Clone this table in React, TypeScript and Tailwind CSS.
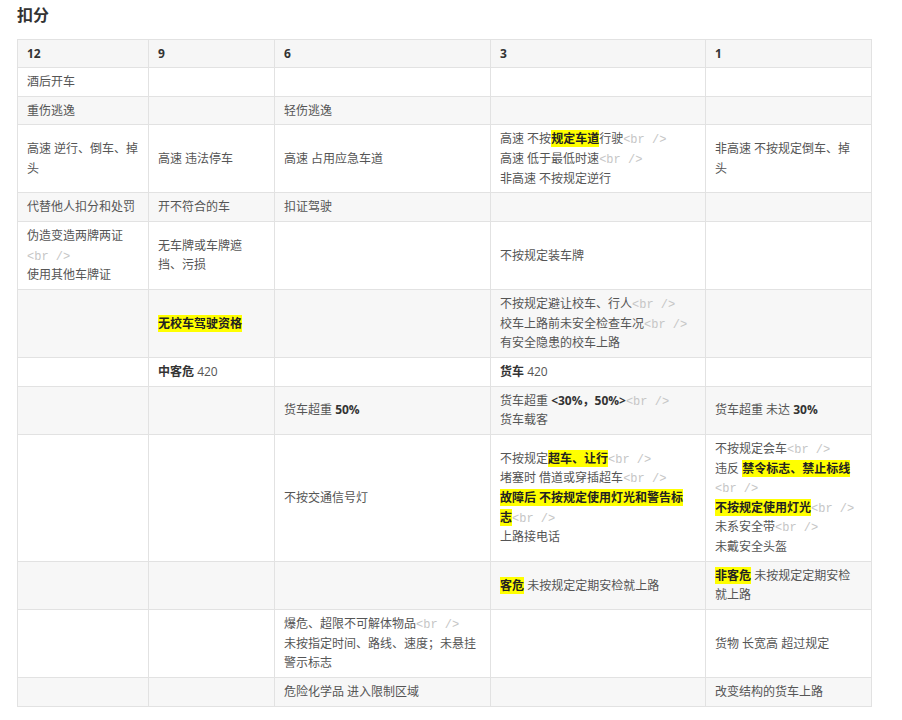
import React from 'react';

const Br: React.FC = () => (
  <span className="font-['Liberation_Mono',monospace] leading-none text-[#c6c6c6]">&lt;br /&gt;</span>
);

const Hl: React.FC<{ children: React.ReactNode }> = ({ children }) => (
  <b className="bg-[#ffff00] font-bold text-[#222]">{children}</b>
);

const B: React.FC<{ children: React.ReactNode }> = ({ children }) => (
  <b className="font-bold text-[#333]">{children}</b>
);

type Row = React.ReactNode[];

const rows: Row[] = [
  ['酒后开车', '', '', '', ''],
  ['重伤逃逸', '', '轻伤逃逸', '', ''],
  [
    <>高速 逆行、倒车、掉<br />头</>,
    '高速 违法停车',
    '高速 占用应急车道',
    <>高速 不按<Hl>规定车道</Hl>行驶<Br /><br />高速 低于最低时速<Br /><br />非高速 不按规定逆行</>,
    <>非高速 不按规定倒车、掉<br />头</>,
  ],
  ['代替他人扣分和处罚', '开不符合的车', '扣证驾驶', '', ''],
  [
    <>伪造变造两牌两证<br /><Br /><br />使用其他车牌证</>,
    <>无车牌或车牌遮<br />挡、污损</>,
    '',
    '不按规定装车牌',
    '',
  ],
  [
    '',
    <Hl>无校车驾驶资格</Hl>,
    '',
    <>不按规定避让校车、行人<Br /><br />校车上路前未安全检查车况<Br /><br />有安全隐患的校车上路</>,
    '',
  ],
  ['', <><B>中客危</B> 420</>, '', <><B>货车</B> 420</>, ''],
  [
    '',
    '',
    <>货车超重 <B>50%</B></>,
    <>货车超重 <B>&lt;30%，50%&gt;</B><Br /><br />货车载客</>,
    <>货车超重 未达 <B>30%</B></>,
  ],
  [
    '',
    '',
    '不按交通信号灯',
    <>
      不按规定<Hl>超车、让行</Hl><Br /><br />
      堵塞时 借道或穿插超车<Br /><br />
      <Hl>故障后 不按规定使用灯光和警告标<br />志</Hl><Br /><br />
      上路接电话
    </>,
    <>
      不按规定会车<Br /><br />
      违反 <Hl>禁令标志、禁止标线</Hl><br /><Br /><br />
      <Hl>不按规定使用灯光</Hl><Br /><br />
      未系安全带<Br /><br />
      未戴安全头盔
    </>,
  ],
  [
    '',
    '',
    '',
    <><Hl>客危</Hl> 未按规定定期安检就上路</>,
    <><Hl>非客危</Hl> 未按规定定期安检<br />就上路</>,
  ],
  [
    '',
    '',
    <>爆危、超限不可解体物品<Br /><br />未按指定时间、路线、速度；未悬挂<br />警示标志</>,
    '',
    '货物 长宽高 超过规定',
  ],
  ['', '', '危险化学品 进入限制区域', '', '改变结构的货车上路'],
];

const widths = ['w-[131px]', 'w-[126px]', 'w-[216px]', 'w-[215px]', 'w-[166px]'];

export default function App() {
  return (
    <div className="min-h-[720px] bg-white pl-[17px] pt-[3px] font-['Open_Sans','Noto_Sans_CJK_SC',sans-serif] text-[#555]">
      <h2 className="text-[16px] font-bold leading-6 text-[#333]">扣分</h2>
      <table className="mt-[12px] table-fixed border-collapse text-[12px] leading-[19.65px]">
        <colgroup>
          {widths.map((w, i) => (
            <col key={i} className={w} />
          ))}
        </colgroup>
        <thead>
          <tr className="bg-[#f6f6f6]">
            {['12', '9', '6', '3', '1'].map((h) => (
              <th
                key={h}
                className="border border-[#e2e2e2] px-[9px] py-[4px] text-left font-bold leading-[19px] text-[#333]"
              >
                {h}
              </th>
            ))}
          </tr>
        </thead>
        <tbody>
          {rows.map((row, i) => (
            <tr key={i} className={i % 2 === 1 ? 'bg-[#f7f7f7]' : 'bg-white'}>
              {row.map((cell, j) => (
                <td
                  key={j}
                  className="border border-[#e2e2e2] px-[9px] py-[4px] align-middle"
                >
                  {cell === '' ? '\u00a0' : cell}
                </td>
              ))}
            </tr>
          ))}
        </tbody>
      </table>
    </div>
  );
}
